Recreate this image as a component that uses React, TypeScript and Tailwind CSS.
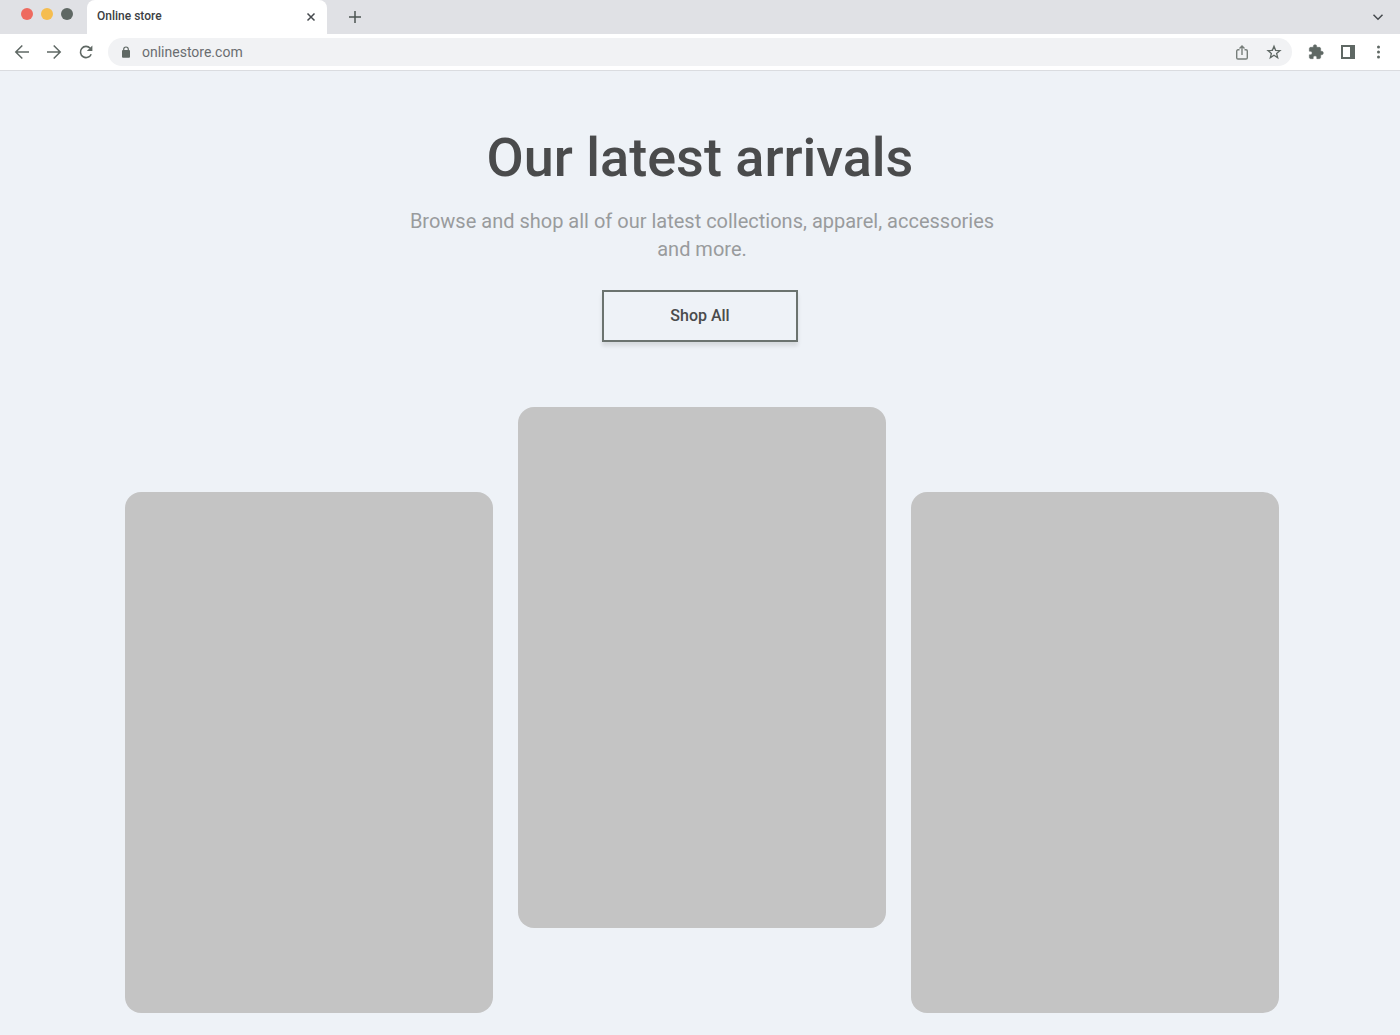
import React from "react";

function Icon({ d, size = 16, className = "" }: { d: string; size?: number; className?: string }) {
  return (
    <svg width={size} height={size} viewBox="0 0 16 16" fill="none" stroke="currentColor" strokeWidth="1.5" className={className} aria-hidden="true">
      <path d={d} />
    </svg>
  );
}

function TabStrip() {
  return (
    <div className="flex h-[34px] bg-[#e0e1e5]">
      <div className="flex w-[87px] shrink-0 gap-2 pt-2 pl-[21px]">
        <button aria-label="Close window" className="size-3 rounded-full bg-[#ee6a5f]" />
        <button aria-label="Minimize window" className="size-3 rounded-full bg-[#f5bd4f]" />
        <button aria-label="Zoom window" className="size-3 rounded-full bg-[#5f6864]" />
      </div>
      <div className="flex w-60 shrink-0 items-center justify-between rounded-t-lg bg-white pr-2 pl-2.5">
        <span className="pb-0.5 text-xs font-medium text-[#3c4043]">Online store</span>
        <button aria-label="Close tab" className="text-[#45494d]">
          <Icon d="M4.5 4.5l7 7M11.5 4.5l-7 7" />
        </button>
      </div>
      <button aria-label="New tab" className="ml-5 text-[#4c5451]">
        <Icon d="M8 2v12M2 8h12" />
      </button>
      <button aria-label="Search tabs" className="mr-3.5 ml-auto text-[#45494d]">
        <Icon d="M3.5 5.8L8 10.3l4.500-4.500" />
      </button>
    </div>
  );
}

function Toolbar() {
  return (
    <div className="flex h-[37px] items-center border-b border-[#dadce0] bg-white pr-3 pl-3.5 text-[#5f6864]">
      <div className="flex shrink-0 gap-4">
        <button aria-label="Back">
          <Icon d="M15 8H2M8.300 1.500L1.800 8l6.500 6.500" />
        </button>
        <button aria-label="Forward">
          <Icon d="M1 8h13M7.700 1.500L14.200 8l-6.500 6.500" />
        </button>
        <button aria-label="Reload">
          <svg width="16" height="16" viewBox="0 0 16 16" aria-hidden="true">
            <path d="M13.200 10.200A5.600 5.600 0 1 1 12.200 4.200" fill="none" stroke="currentColor" strokeWidth="1.600" />
            <path d="M14.400 1.400V7H8.800z" fill="currentColor" />
          </svg>
        </button>
      </div>
      <div className="ml-3.5 flex h-7 min-w-0 flex-1 items-center rounded-full bg-[#f1f2f4] px-2.5">
        <svg width="16" height="16" viewBox="0 0 16 16" className="shrink-0" aria-hidden="true">
          <path d="M5.700 7V5.300a2.300 2.300 0 0 1 4.600 0V7" fill="none" stroke="currentColor" strokeWidth="1.200" />
          <rect x="4" y="6" width="8" height="7.700" rx="1" fill="currentColor" />
        </svg>
        <input aria-label="Address" defaultValue="onlinestore.com" className="ml-2 min-w-0 flex-1 bg-transparent text-sm text-[#6a6d70] outline-none" />
        <button aria-label="Share" className="text-[#777e7a]">
          <svg width="16" height="16" viewBox="0 0 16 16" fill="none" stroke="currentColor" strokeWidth="1.400" aria-hidden="true">
            <path d="M5.500 5.800H4A1.300 1.300 0 0 0 2.700 7.100v6.600A1.300 1.300 0 0 0 4 15h8a1.300 1.300 0 0 0 1.300-1.300V7.100A1.300 1.300 0 0 0 12 5.800h-1.500M8 11V2.500M5.500 4.600L8 2.100l2.500 2.500" />
          </svg>
        </button>
        <button aria-label="Bookmark" className="ml-4">
          <svg width="16" height="16" viewBox="0 0 16 16" fill="none" stroke="currentColor" strokeWidth="1.300" aria-hidden="true">
            <path d="M8 2.200l1.600 4.100 4.400.3-3.400 2.800 1.100 4.300L8 11.300l-3.700 2.400 1.100-4.300L2 6.600l4.400-.3z" />
          </svg>
        </button>
      </div>
      <div className="ml-4 flex shrink-0 gap-4">
        <button aria-label="Extensions">
          <svg width="16" height="16" viewBox="0 0 24 24" fill="currentColor" aria-hidden="true">
            <path d="M20.500 11H19V7c0-1.100-.9-2-2-2h-4V3.500a2.500 2.500 0 0 0-5 0V5H4c-1.100 0-1.990.9-1.990 2v3.800H3.500c1.490 0 2.700 1.210 2.700 2.700s-1.210 2.700-2.700 2.700H2V20c0 1.100.9 2 2 2h3.800v-1.500c0-1.490 1.210-2.700 2.700-2.700s2.700 1.210 2.700 2.700V22H17c1.100 0 2-.9 2-2v-4h1.500a2.500 2.500 0 0 0 0-5z" stroke="currentColor" strokeWidth="0.800" />
          </svg>
        </button>
        <button aria-label="Side panel">
          <svg width="16" height="16" viewBox="0 0 16 16" fill="currentColor" fillRule="evenodd" aria-hidden="true">
            <path d="M1 1h14v14H1zM3 3v10h7V3z" />
          </svg>
        </button>
        <button aria-label="Menu">
          <svg width="16" height="16" viewBox="0 0 16 16" fill="currentColor" aria-hidden="true">
            <circle cx="6.500" cy="3" r="1.500" />
            <circle cx="6.500" cy="8" r="1.500" />
            <circle cx="6.500" cy="13" r="1.500" />
          </svg>
        </button>
      </div>
    </div>
  );
}

export default function App() {
  return (
    <div className="min-h-screen bg-[#eef2f7] font-['Roboto',sans-serif]">
      <header>
        <TabStrip />
        <Toolbar />
      </header>
      <main className="px-6 pt-14 pb-[22px]">
        <section className="flex flex-col items-center text-center">
          <h1 className="text-[54px] leading-[62px] font-medium text-[#4a4b4c]">Our latest arrivals</h1>
          <p className="mt-[18px] max-w-[620px] pl-1 text-xl leading-7 text-[#999b9d]">
            Browse and shop all of our latest collections, apparel, accessories and more.
          </p>
          <button className="mt-[27px] h-[52px] w-[196px] border-2 border-[#6b736f] text-base font-medium text-[#4a4b4c] shadow-[0_4px_4px_rgba(0,0,0,0.1)]">
            Shop All
          </button>
        </section>
        <section aria-label="Latest products" className="mx-auto mt-[65px] grid max-w-[1158px] grid-cols-3 gap-[25px] pl-1">
          <article className="mt-[85px] h-[521px] rounded-2xl bg-[#c4c4c4]" />
          <article className="h-[521px] rounded-2xl bg-[#c4c4c4]" />
          <article className="mt-[85px] h-[521px] rounded-2xl bg-[#c4c4c4]" />
        </section>
      </main>
    </div>
  );
}
